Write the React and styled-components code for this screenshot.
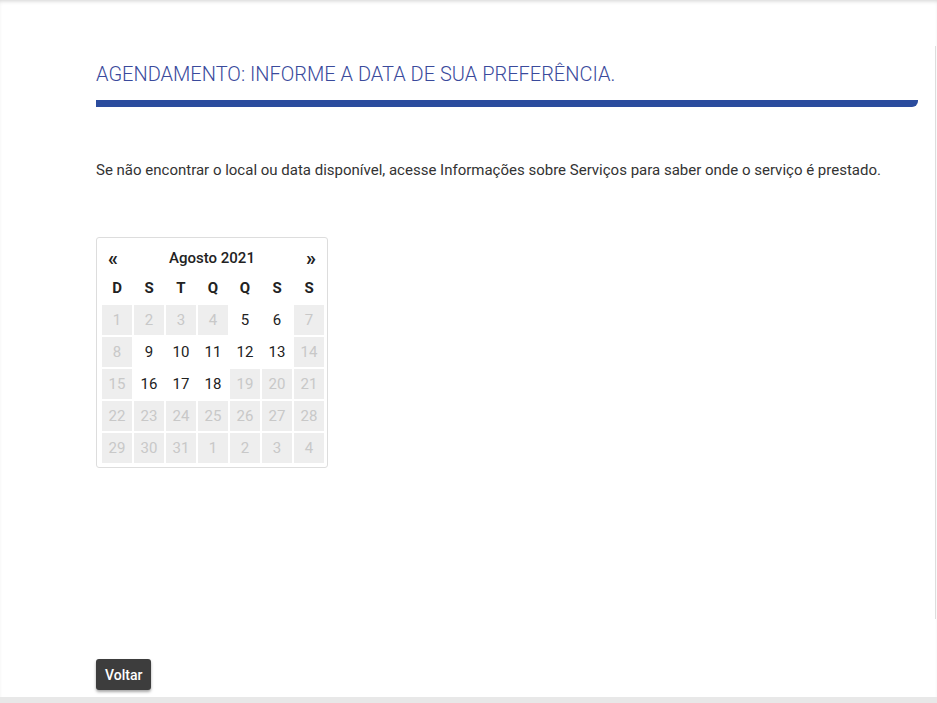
import React from 'react';
import styled, { createGlobalStyle } from 'styled-components';

const Global = createGlobalStyle`
  body { margin: 0; font-family: Roboto, "Liberation Sans", sans-serif; background: #fff; }
`;

const Page = styled.div`
  height: 703px;
  display: flex;
  flex-direction: column;
  box-shadow: inset 0 3px 4px -2px rgba(0,0,0,0.18);
  overflow: hidden;
`;

const Main = styled.div`
  flex: 1;
  display: flex;
  flex-direction: column;
  padding: 46px 0 0 96px;
`;

const Content = styled.div`
  height: 559px;
  border-right: 1px solid #ddd;
  margin-right: 1px;
  padding-right: 17px;
  padding-top: 14px;
`;

const Title = styled.h1`
  margin: 0;
  font-weight: 300;
  font-size: 20px;
  color: #3a4a9c;
  line-height: 28px;
`;

const Bar = styled.div`
  height: 7px;
  background: #2b4c9e;
  margin-top: 12px;
  border-bottom-right-radius: 6px;
`;

const Info = styled.p`
  margin: 51px 0 0;
  font-size: 15px;
  line-height: 24px;
  color: #333;
  max-width: 800px;
`;

const Calendar = styled.div`
  margin-top: 55px;
  width: 232px;
  border: 1px solid #ddd;
  border-radius: 3px;
  padding: 5px 5px 4px 5px;
  box-sizing: border-box;
`;

const Header = styled.div`
  display: flex;
  justify-content: space-between;
  align-items: center;
  height: 30px;
  padding: 0 6px;
  font-size: 15px;
  font-weight: 500;
  color: #222;
`;

const Arrow = styled.span`
  font-size: 20px;
  font-weight: 700;
  line-height: 1;
`;

const Grid = styled.div`
  display: grid;
  grid-template-columns: repeat(7, 30px);
  gap: 2px;
`;

const Dow = styled.div`
  height: 30px;
  display: flex;
  align-items: center;
  justify-content: center;
  font-weight: 700;
  font-size: 15px;
  color: #222;
`;

const Day = styled.div`
  height: 30px;
  display: flex;
  align-items: center;
  justify-content: center;
  font-size: 15px;
  background: ${p => (p.off ? '#eee' : '#fff')};
  color: ${p => (p.off ? '#c8c8c8' : '#222')};
`;

const Footer = styled.div`
  padding: 40px 0 0 96px;
  height: 48px;
`;

const Button = styled.button`
  background: #3d3d3d;
  color: #fff;
  border: none;
  border-radius: 3px;
  font-family: Roboto, sans-serif;
  font-weight: 500;
  font-size: 14px;
  height: 31px;
  padding: 0 9px;
  box-shadow: 0 2px 3px rgba(0,0,0,0.35);
`;

const BottomBand = styled.div`
  height: 8px;
  background: #e8e8e8;
`;

const available = [5, 6, 9, 10, 11, 12, 13, 16, 17, 18];
const days = [
  ...Array.from({ length: 31 }, (_, i) => ({ n: i + 1, off: !available.includes(i + 1) })),
  ...[1, 2, 3, 4].map(n => ({ n, off: true })),
];

export default function App() {
  return (
    <Page>
      <Global />
      <Main>
        <Content>
          <Title>AGENDAMENTO: INFORME A DATA DE SUA PREFERÊNCIA.</Title>
          <Bar />
          <Info>
            Se não encontrar o local ou data disponível, acesse Informações sobre Serviços para saber onde o serviço é prestado.
          </Info>
          <Calendar>
            <Header>
              <Arrow>«</Arrow>
              <span>Agosto 2021</span>
              <Arrow>»</Arrow>
            </Header>
            <Grid>
              {['D', 'S', 'T', 'Q', 'Q', 'S', 'S'].map((d, i) => (
                <Dow key={i}>{d}</Dow>
              ))}
              {days.map((d, i) => (
                <Day key={i} off={d.off}>{d.n}</Day>
              ))}
            </Grid>
          </Calendar>
        </Content>
      </Main>
      <Footer>
        <Button>Voltar</Button>
      </Footer>
      <BottomBand />
    </Page>
  );
}
